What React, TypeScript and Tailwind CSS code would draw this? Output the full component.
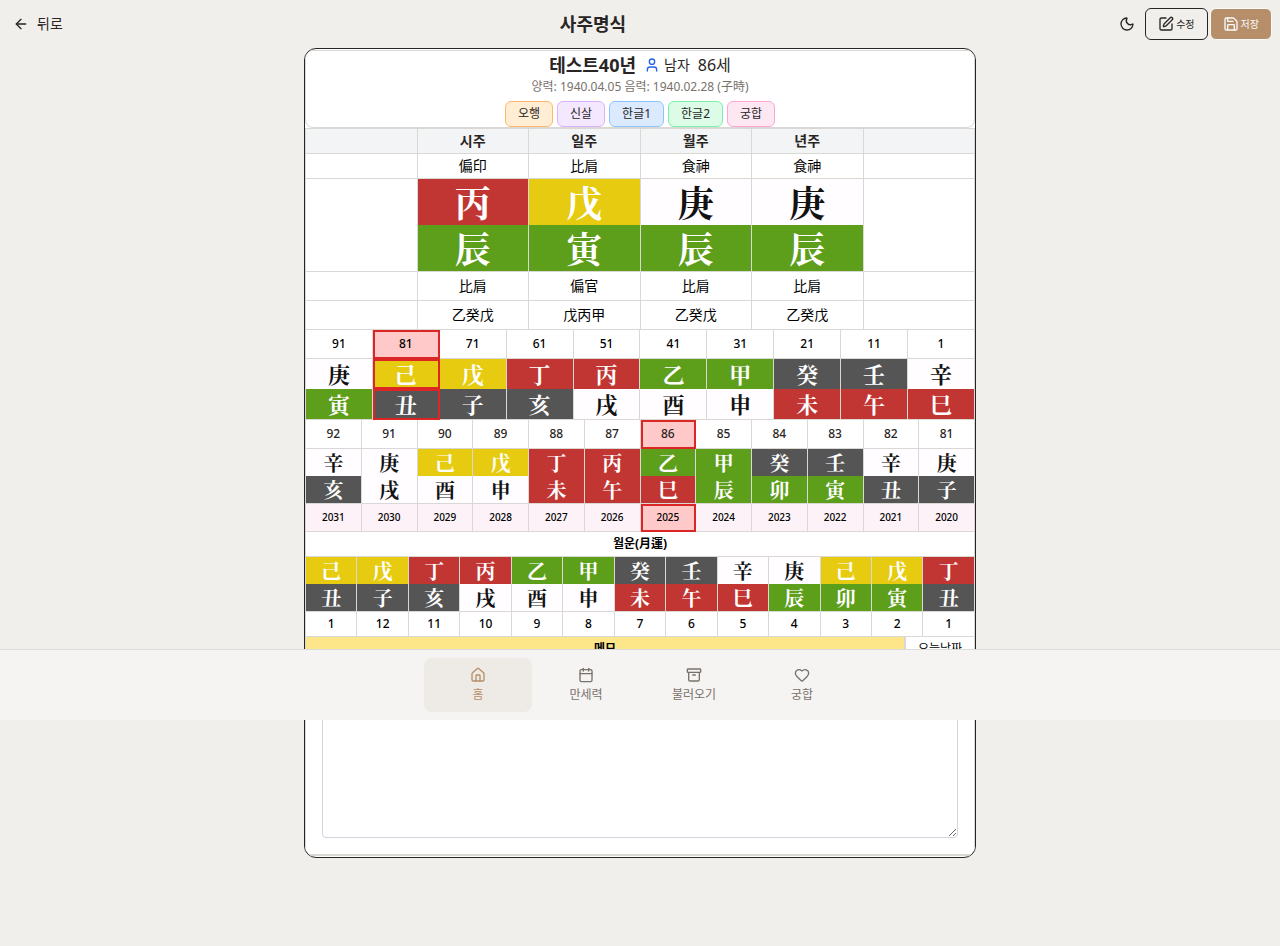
import { ArrowLeft, Moon, SquarePen, Save, User, House, Calendar, Archive, Heart } from "lucide-react";

const tones: Record<string, string> = {
  wood: "bg-[#5d9e1b] text-white",
  fire: "bg-[#c13533] text-white",
  earth: "bg-[#e6cb10] text-white",
  metal: "bg-[#fffdff] text-[#121212]",
  water: "bg-[#555555] text-white",
};

const elements: Record<string, string> = {
  甲: "wood", 乙: "wood", 寅: "wood", 卯: "wood", 辰: "wood",
  丙: "fire", 丁: "fire", 巳: "fire", 午: "fire", 未: "fire",
  戊: "earth", 己: "earth",
  庚: "metal", 辛: "metal", 申: "metal", 酉: "metal", 戌: "metal",
  壬: "water", 癸: "water", 亥: "water", 子: "water", 丑: "water",
};

const brush = "font-['AR_PL_UKai_TW','AR_PL_UKai_CN','KaiTi','STKaiti','Noto_Serif_CJK_KR','Noto_Sans_CJK_KR',serif] font-bold";
const cell = "border-r border-[#dad8d5] p-0 text-center align-middle";
const table = "w-full table-fixed border-separate border-spacing-0 border-l border-[#dad8d5]";
const picked = "bg-[#ffc9c9] outline-2 -outline-offset-2 outline-[#dc2626]";

function GlyphRow({ chars, size, last, selected }: { chars: string; size: string; last?: boolean; selected?: number }) {
  return (
    <tr>
      {[...chars].map((c, i) => (
        <td
          key={i}
          className={`${cell} ${last ? "border-b" : ""} ${size} ${tones[elements[c]]} ${brush} leading-none ${
            selected === i ? "outline-2 -outline-offset-2 outline-[#dc2626]" : ""
          }`}
        >
          {c}
        </td>
      ))}
    </tr>
  );
}

function TextRow({ items, style, selected }: { items: (string | number)[]; style: string; selected?: number }) {
  return (
    <tr>
      {items.map((t, i) => (
        <td key={i} className={`${cell} border-b ${style} ${selected === i ? picked : ""}`}>
          {t}
        </td>
      ))}
    </tr>
  );
}

const down = (from: number, n: number, step = 1) => Array.from({ length: n }, (_, i) => from - i * step);

const filters = [
  ["오행", "border-[#ffb86a] bg-[#ffedd4]"],
  ["신살", "border-[#dab2ff] bg-[#f3e8ff]"],
  ["한글1", "border-[#8ec5ff] bg-[#dbeafe]"],
  ["한글2", "border-[#7bf1a8] bg-[#dcfce7]"],
  ["궁합", "border-[#fda5d5] bg-[#fce7f3]"],
];

const tabs = [
  { label: "홈", Icon: House, active: true },
  { label: "만세력", Icon: Calendar },
  { label: "불러오기", Icon: Archive },
  { label: "궁합", Icon: Heart },
];

function PillarTable() {
  const side = `${cell} border-b`;
  return (
    <table className={`${table} border-t text-sm text-black`}>
      <thead>
        <tr className="bg-[#f3f4f6] text-[#292524]">
          {["", "시주", "일주", "월주", "년주", ""].map((t, i) => (
            <th key={i} className={`${side} h-[25px] leading-5 font-bold`}>{t}</th>
          ))}
        </tr>
      </thead>
      <tbody>
        <TextRow items={["", "偏印", "比肩", "食神", "食神", ""]} style="h-[25px] leading-5" />
        <tr>
          <td rowSpan={2} className={side} />
          {[..."丙戊庚庚"].map((c, i) => (
            <td key={i} className={`${cell} h-[46px] text-4xl leading-none ${tones[elements[c]]} ${brush}`}>{c}</td>
          ))}
          <td rowSpan={2} className={side} />
        </tr>
        <GlyphRow chars="辰寅辰辰" size="h-[47px] text-4xl" last />
        <TextRow items={["", "比肩", "偏官", "比肩", "比肩", ""]} style="h-[29px] leading-5" />
        <TextRow items={["", "乙癸戊", "戊丙甲", "乙癸戊", "乙癸戊", ""]} style="h-[29px] leading-5" />
      </tbody>
    </table>
  );
}

export default function App() {
  return (
    <div className="relative min-h-screen bg-[#f0efeb] pb-[88px] font-['Noto_Sans','Noto_Sans_CJK_KR',sans-serif] text-[#292524]">
      <header className="flex h-12 items-center justify-between px-2">
        <button className="flex items-center gap-2 pr-3 pl-[5px] text-sm">
          <ArrowLeft size={16} />
          뒤로
        </button>
        <h1 className="text-lg font-bold">사주명식</h1>
        <div className="flex items-center gap-0.5">
          <button aria-label="다크 모드" className="p-2">
            <Moon size={16} />
          </button>
          <button className="flex h-8 items-center gap-0.5 rounded-md border border-[#292524] px-3 text-[10px]">
            <SquarePen size={16} />
            수정
          </button>
          <button className="flex h-8 items-center gap-0.5 rounded-md border border-[#fafaf9] bg-[#b68f6a] px-3 text-[10px] text-[#fafaf9]">
            <Save size={16} />
            저장
          </button>
        </div>
      </header>

      <main className="mx-auto max-w-2xl overflow-hidden rounded-xl border border-[#292524] bg-white pt-px pb-px">
        <section className="flex flex-col items-center rounded-lg border border-[#dad8d5]">
          <div className="flex h-7 items-center">
            <h2 className="text-lg font-bold">테스트40년</h2>
            <User size={16} className="ml-2 text-[#2563eb]" />
            <span className="ml-1 text-sm">남자</span>
            <span className="ml-2 text-base">86세</span>
          </div>
          <p className="text-xs leading-4 text-[#79716b]">양력: 1940.04.05 음력: 1940.02.28 (子時)</p>
          <div className="mt-1.5 flex gap-1">
            {filters.map(([label, color]) => (
              <button key={label} className={`h-[26px] rounded-md border px-3 text-xs ${color}`}>{label}</button>
            ))}
          </div>
        </section>

        <PillarTable />

        <table className={`${table} text-xs font-medium text-black`}>
          <tbody>
            <TextRow items={down(91, 10, 10)} style="h-[29px]" selected={1} />
            <GlyphRow chars="庚己戊丁丙乙甲癸壬辛" size="h-[30px] text-[22px]" selected={1} />
            <GlyphRow chars="寅丑子亥戌酉申未午巳" size="h-[31px] text-[22px]" selected={1} last />
          </tbody>
        </table>

        <table className={`${table} text-xs`}>
          <tbody>
            <TextRow items={down(92, 12)} style="h-[29px] font-medium" selected={6} />
            <GlyphRow chars="辛庚己戊丁丙乙甲癸壬辛庚" size="h-[27px] text-xl" />
            <GlyphRow chars="亥戌酉申未午巳辰卯寅丑子" size="h-[28px] text-xl" last />
            <TextRow items={down(2031, 12)} style="h-[28px] bg-[#fdf2f8] text-[10px] font-medium text-black" selected={6} />
          </tbody>
        </table>

        <table className={`${table} text-xs text-black`}>
          <thead>
            <tr>
              <th colSpan={13} className={`${cell} h-[25px] border-b font-bold`}>월운(月運)</th>
            </tr>
          </thead>
          <tbody className="font-medium">
            <GlyphRow chars="己戊丁丙乙甲癸壬辛庚己戊丁" size="h-[27px] text-xl" />
            <GlyphRow chars="丑子亥戌酉申未午巳辰卯寅丑" size="h-[28px] text-xl" last />
            <TextRow items={[1, ...down(12, 12)]} style="h-[25px]" />
          </tbody>
        </table>

        <section className="border-x border-b-2 border-[#dad8d5] text-xs text-black">
          <div className="flex h-6">
            <label htmlFor="memo" className="flex flex-1 items-center justify-center bg-[#fde68a] font-bold">메모</label>
            <button className="w-[70px] border-l-2 border-[#dad8d5]">오늘날짜</button>
          </div>
          <div className="p-4">
            <textarea id="memo" className="block h-[161px] w-full resize rounded-sm border border-[#d1d5dc] p-2" />
          </div>
        </section>
      </main>

      <nav className="absolute inset-x-0 top-[649px] flex h-[71px] justify-center border-t border-[#dedcda] bg-[#f5f4f2] py-2 text-xs">
        {tabs.map(({ label, Icon, active }) => (
          <a
            key={label}
            href="#"
            className={`flex w-[108px] flex-col items-center justify-center gap-1 rounded-lg ${
              active ? "bg-[#eeebe6] text-[#b68f6a]" : "text-[#79716b]"
            }`}
          >
            <Icon size={16} />
            <span className="leading-4">{label}</span>
          </a>
        ))}
      </nav>
    </div>
  );
}
